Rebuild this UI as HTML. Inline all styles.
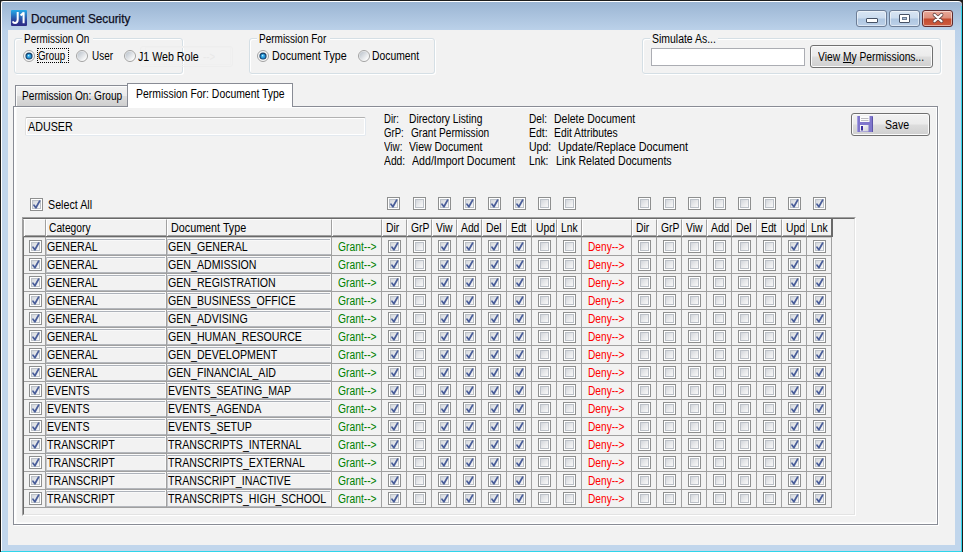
<!DOCTYPE html>
<html><head><meta charset="utf-8">
<style>
*{box-sizing:border-box;margin:0;padding:0}
html,body{width:963px;height:552px;overflow:hidden;background:#000}
body{position:relative;font-family:"Liberation Sans", sans-serif;font-size:12px;color:#000}
.a{position:absolute}
.t{position:absolute;white-space:pre;font-size:12px;line-height:13px;transform-origin:0 0;color:#000}
</style></head><body>
<svg width="0" height="0" style="position:absolute">
<defs>
<linearGradient id="cbg" x1="0" y1="0" x2="1" y2="1"><stop offset="0" stop-color="#d0d4da"/><stop offset="0.5" stop-color="#e8e9eb"/><stop offset="1" stop-color="#fbfbfb"/></linearGradient>
<linearGradient id="rdg" x1="0.15" y1="0.15" x2="0.85" y2="0.85"><stop offset="0" stop-color="#c2c9d1"/><stop offset="1" stop-color="#fbfbfb"/></linearGradient>
<radialGradient id="rdd" cx="0.5" cy="0.5" r="0.5" fx="0.4" fy="0.35"><stop offset="0" stop-color="#c8f0ff"/><stop offset="0.45" stop-color="#36ade9"/><stop offset="1" stop-color="#1f7fc4"/></radialGradient>
<g id="cbu"><rect x="0.5" y="0.5" width="12" height="12" fill="#fff" stroke="#8e8f8f"/><rect x="2.5" y="2.5" width="8" height="8" fill="url(#cbg)" stroke="#bcc1c8"/></g>
<g id="cbc"><use href="#cbu"/><path d="M4 7.3 L5.9 9.8 L9.6 3.1" fill="none" stroke="#4a5e9a" stroke-width="1.8" stroke-linecap="round" stroke-linejoin="round"/></g>
<g id="rdu"><circle cx="6" cy="6" r="5.5" fill="#f4f4f4" stroke="#a2a2a2"/><circle cx="6" cy="6" r="4.6" fill="url(#rdg)"/></g>
<g id="rdc"><circle cx="6" cy="6" r="5.5" fill="#f8f8f8" stroke="#a2a2a2"/><circle cx="6" cy="6" r="3.6" fill="#173f66"/><circle cx="6" cy="6.2" r="2.5" fill="url(#rdd)"/></g>
</defs></svg>

<div class="a" style="left:0px;top:0px;width:963px;height:552px;background:#1c1c1c"></div>
<div class="a" style="left:1px;top:1px;width:961px;height:551px;background:linear-gradient(#9bb5d3,#bcd2ea 29px,#c1d6ec 60px,#c1d6ec);border-left:1px solid #fff;border-top:1px solid #fff;border-radius:2px 4px 0 0"></div>
<div class="a" style="left:961px;top:6px;width:1px;height:546px;background:#30d5ea"></div>
<div class="a" style="left:1px;top:551px;width:961px;height:1px;background:#30d5ea"></div>
<svg class="a" style="left:11px;top:10px" width="16" height="16"><defs><linearGradient id="ic" x1="0" y1="0" x2="0" y2="1"><stop offset="0" stop-color="#25abe9"/><stop offset="0.45" stop-color="#2a64b5"/><stop offset="0.72" stop-color="#2c3b95"/><stop offset="1" stop-color="#2f2b84"/></linearGradient></defs><rect x="0" y="0" width="16" height="16" rx="1" fill="url(#ic)"/><path d="M6.7 2 V9.6 Q6.7 13 4 13 Q2.4 13 1.7 11.4" fill="none" stroke="#fff" stroke-width="2"/><path d="M12.6 13.3 V2.2 M12.8 2.4 L9.6 5.4" fill="none" stroke="#fff" stroke-width="2"/></svg>
<div class="t" style="left:31.00px;top:13px;transform:scaleX(0.9802);color:#0e0e22;-webkit-text-stroke:0.25px #0e0e22">Document Security</div>
<div class="a" style="left:856px;top:10px;width:31px;height:17px;border:1px solid #6c7d96;border-radius:3px;background:linear-gradient(#d8e5f3,#cbdcef 48%,#aec6e1 52%,#bcd0e8);box-shadow:inset 0 0 0 1px rgba(255,255,255,0.5)"></div>
<div class="a" style="left:889px;top:10px;width:31px;height:17px;border:1px solid #6c7d96;border-radius:3px;background:linear-gradient(#d8e5f3,#cbdcef 48%,#aec6e1 52%,#bcd0e8);box-shadow:inset 0 0 0 1px rgba(255,255,255,0.5)"></div>
<div class="a" style="left:922px;top:10px;width:31px;height:17px;border:1px solid #5e2a2e;border-radius:3px;background:linear-gradient(#e9a899,#dc8f7c 48%,#c44a2e 52%,#cd5c40);box-shadow:inset 0 0 0 1px rgba(255,255,255,0.5)"></div>
<div class="a" style="left:866px;top:18px;width:12px;height:5px;background:#fff;border:1px solid #465266;border-radius:1px"></div>
<div class="a" style="left:899px;top:14px;width:11px;height:9px;background:#fff;border:1px solid #465266;border-radius:1px"></div>
<div class="a" style="left:902px;top:17px;width:5px;height:3px;background:#a7bcd6;border:1px solid #6a7a90"></div>
<svg class="a" style="left:930px;top:11px" width="16" height="14"><path d="M4.5 3.8 L11.5 10.2 M11.5 3.8 L4.5 10.2" stroke="#6b4a48" stroke-width="3.8" stroke-linecap="round"/><path d="M4.5 3.8 L11.5 10.2 M11.5 3.8 L4.5 10.2" stroke="#fff" stroke-width="2.2" stroke-linecap="round"/></svg>
<div class="a" style="left:8px;top:30px;width:947px;height:515px;background:#f2f2f2"></div>
<div class="a" style="left:14px;top:38px;width:169px;height:36px;border:1px solid #d5dfe5;border-radius:3px;box-shadow:inset 1px 1px 0 #fff, 1px 1px 0 #fff"></div><div class="a" style="left:22px;top:37px;width:71px;height:3px;background:#f2f2f2"></div><div class="t" style="left:24.00px;top:33px;transform:scaleX(0.8304);">Permission On</div>
<div class="a" style="left:249px;top:38px;width:186px;height:36px;border:1px solid #d5dfe5;border-radius:3px;box-shadow:inset 1px 1px 0 #fff, 1px 1px 0 #fff"></div><div class="a" style="left:257px;top:37px;width:73px;height:3px;background:#f2f2f2"></div><div class="t" style="left:259.00px;top:33px;transform:scaleX(0.8333);">Permission For</div>
<div class="a" style="left:642px;top:38px;width:299px;height:36px;border:1px solid #d5dfe5;border-radius:3px;box-shadow:inset 1px 1px 0 #fff, 1px 1px 0 #fff"></div><div class="a" style="left:650px;top:37px;width:68px;height:3px;background:#f2f2f2"></div><div class="t" style="left:652.00px;top:33px;transform:scaleX(0.8712);">Simulate As...</div>
<div class="a" style="left:140px;top:46px;width:93px;height:21px;border:1px solid #eeeeee;border-radius:3px"></div>
<div class="a" style="left:145px;top:47px;width:86px;height:18px;border:1px solid #f0f0f0"></div>
<div class="t" style="left:203.00px;top:51px;transform:scaleX(0.8000);color:#e9e9e9">--></div>
<svg class="a" style="left:23px;top:50px" width="12" height="12"><use href="#rdc"/></svg>
<div class="t" style="left:38.00px;top:50px;transform:scaleX(0.8118);">Group</div>
<div class="a" style="left:37px;top:48px;width:32px;height:15px;border:1px dotted #000"></div>
<svg class="a" style="left:76px;top:50px" width="12" height="12"><use href="#rdu"/></svg>
<div class="t" style="left:92.00px;top:50px;transform:scaleX(0.8280);">User</div>
<svg class="a" style="left:124px;top:50px" width="12" height="12"><use href="#rdu"/></svg>
<div class="t" style="left:137.80px;top:51px;transform:scaleX(0.8870);">J1 Web Role</div>
<svg class="a" style="left:257px;top:50px" width="12" height="12"><use href="#rdc"/></svg>
<div class="t" style="left:272.00px;top:50px;transform:scaleX(0.8905);">Document Type</div>
<svg class="a" style="left:358px;top:50px" width="12" height="12"><use href="#rdu"/></svg>
<div class="t" style="left:372.00px;top:50px;transform:scaleX(0.8618);">Document</div>
<div class="a" style="left:651px;top:48px;width:154px;height:18px;background:#fff;border:1px solid #abadb3"></div>
<div class="a" style="left:810px;top:45px;width:123px;height:23px;border:1px solid #707070;border-radius:3px;background:linear-gradient(#f2f2f2,#ebebeb 48%,#dddddd 52%,#cfcfcf);box-shadow:inset 0 0 0 1px #fbfbfb"></div>
<div class="t" style="left:818.00px;top:51px;transform:scaleX(0.8565);">View <u>M</u>y Permissions...</div>
<div class="a" style="left:13px;top:106px;width:925px;height:419px;border:1px solid #898c95;background:#f2f2f2;box-shadow:inset 1px 1px 0 #fff,inset 2px 0 0 #fefefe,inset 3px 0 0 #f9f9f9,inset -1px -1px 0 #fff,inset 0 -2px 0 #f9f9f9,1px 1px 0 #fff"></div>
<div class="a" style="left:15px;top:85px;width:113px;height:21px;border:1px solid #898c95;border-bottom:none;background:linear-gradient(#f2f2f2,#ebebeb 48%,#dddddd 52%,#cfcfcf);box-shadow:inset 1px 1px 0 #fcfcfc"></div>
<div class="t" style="left:21.60px;top:90px;transform:scaleX(0.8445);">Permission On: Group</div>
<div class="a" style="left:127px;top:83px;width:166px;height:24px;border:1px solid #898c95;border-bottom:none;background:#fff"></div>
<div class="t" style="left:136.00px;top:88px;transform:scaleX(0.8684);">Permission For: Document Type</div>
<div class="a" style="left:25px;top:117px;width:341px;height:19px;border:1px solid #b2b2b2;border-bottom-color:#e3e9ef;border-right-color:#e3e9ef;border-left-color:#e0e0e0;background:#f2f2f2;border-radius:2px;box-shadow:inset 1px 1px 0 #fff,inset -1px -1px 0 #fff"></div>
<div class="t" style="left:28.00px;top:121px;transform:scaleX(0.8940);">ADUSER</div>
<div class="t" style="left:384.30px;top:113px;transform:scaleX(0.7947);">Dir:</div>
<div class="t" style="left:409.20px;top:113px;transform:scaleX(0.8523);">Directory Listing</div>
<div class="t" style="left:384.30px;top:127px;transform:scaleX(0.8000);">GrP:</div>
<div class="t" style="left:410.80px;top:127px;transform:scaleX(0.8430);">Grant Permission</div>
<div class="t" style="left:384.30px;top:141px;transform:scaleX(0.8182);">Viw:</div>
<div class="t" style="left:409.20px;top:141px;transform:scaleX(0.8762);">View Document</div>
<div class="t" style="left:384.30px;top:155px;transform:scaleX(0.8600);">Add:</div>
<div class="t" style="left:412.40px;top:155px;transform:scaleX(0.8846);">Add/Import Document</div>
<div class="t" style="left:529.30px;top:113px;transform:scaleX(0.8429);">Del:</div>
<div class="t" style="left:554.30px;top:113px;transform:scaleX(0.8753);">Delete Document</div>
<div class="t" style="left:529.30px;top:127px;transform:scaleX(0.8714);">Edt:</div>
<div class="t" style="left:554.30px;top:127px;transform:scaleX(0.8608);">Edit Attributes</div>
<div class="t" style="left:529.30px;top:141px;transform:scaleX(0.8760);">Upd:</div>
<div class="t" style="left:558.40px;top:141px;transform:scaleX(0.9028);">Update/Replace Document</div>
<div class="t" style="left:529.30px;top:155px;transform:scaleX(0.8565);">Lnk:</div>
<div class="t" style="left:556.30px;top:155px;transform:scaleX(0.8847);">Link Related Documents</div>
<div class="a" style="left:851px;top:113px;width:79px;height:23px;border:1px solid #707070;border-radius:3px;background:linear-gradient(#f2f2f2,#ebebeb 48%,#dddddd 52%,#cfcfcf);box-shadow:inset 0 0 0 1px #fbfbfb"></div>
<svg class="a" style="left:857px;top:116px" width="16" height="16"><defs><linearGradient id="fsh" x1="0" y1="0" x2="1" y2="1"><stop offset="0" stop-color="#ffffff"/><stop offset="1" stop-color="#cfcfd6"/></linearGradient></defs><rect x="0" y="0" width="16" height="16" fill="#7f76cc"/><rect x="0" y="0" width="1" height="16" fill="#a29ce0"/><rect x="15" y="1" width="1" height="15" fill="#5d55a8"/><rect x="3" y="0" width="9.5" height="6" fill="#fbfbfb"/><rect x="4" y="2" width="7.5" height="1" fill="#bdbdc2"/><rect x="4" y="4" width="7.5" height="1" fill="#bdbdc2"/><rect x="3" y="9" width="8.5" height="6.5" fill="url(#fsh)"/><rect x="4" y="10" width="2" height="4.5" fill="#3b2fa0"/></svg>
<div class="t" style="left:885.00px;top:119px;transform:scaleX(0.8786);">Save</div>
<svg class="a" style="left:30px;top:198px" width="13" height="13"><use href="#cbc"/></svg>
<div class="t" style="left:48.00px;top:199px;transform:scaleX(0.8918);">Select All</div>
<svg class="a" style="left:387px;top:197px" width="13" height="13"><use href="#cbc"/></svg>
<svg class="a" style="left:638px;top:197px" width="13" height="13"><use href="#cbu"/></svg>
<svg class="a" style="left:413px;top:197px" width="13" height="13"><use href="#cbu"/></svg>
<svg class="a" style="left:663px;top:197px" width="13" height="13"><use href="#cbu"/></svg>
<svg class="a" style="left:438px;top:197px" width="13" height="13"><use href="#cbc"/></svg>
<svg class="a" style="left:688px;top:197px" width="13" height="13"><use href="#cbu"/></svg>
<svg class="a" style="left:463px;top:197px" width="13" height="13"><use href="#cbc"/></svg>
<svg class="a" style="left:713px;top:197px" width="13" height="13"><use href="#cbu"/></svg>
<svg class="a" style="left:488px;top:197px" width="13" height="13"><use href="#cbc"/></svg>
<svg class="a" style="left:738px;top:197px" width="13" height="13"><use href="#cbu"/></svg>
<svg class="a" style="left:513px;top:197px" width="13" height="13"><use href="#cbc"/></svg>
<svg class="a" style="left:763px;top:197px" width="13" height="13"><use href="#cbu"/></svg>
<svg class="a" style="left:538px;top:197px" width="13" height="13"><use href="#cbu"/></svg>
<svg class="a" style="left:788px;top:197px" width="13" height="13"><use href="#cbc"/></svg>
<svg class="a" style="left:563px;top:197px" width="13" height="13"><use href="#cbu"/></svg>
<svg class="a" style="left:813px;top:197px" width="13" height="13"><use href="#cbc"/></svg>
<div class="a" style="left:22px;top:217px;width:834px;height:299px;border-left:1px solid #a0a0a0;border-top:1px solid #a0a0a0;border-right:1px solid #fff;border-bottom:1px solid #fff"></div>
<div class="a" style="left:23px;top:218px;width:832px;height:297px;border-left:1px solid #696969;border-top:1px solid #696969;border-right:1px solid #e3e3e3;border-bottom:1px solid #e3e3e3"></div>
<div class="a" style="left:24px;top:237px;width:808px;height:1px;background:#c8c8c8"></div>
<div class="a" style="left:23px;top:219px;width:23px;height:18px;background:#f2f2f2;border-left:1px solid #a0a0a0;border-top:1px solid #fff;border-bottom:1px solid #696969;box-shadow:inset 1px 0 0 #fff,inset 0 -1px 0 #a0a0a0"></div>
<div class="a" style="left:45px;top:219px;width:122px;height:18px;background:#f2f2f2;border-left:1px solid #a0a0a0;border-top:1px solid #fff;border-bottom:1px solid #696969;box-shadow:inset 1px 0 0 #fff,inset 0 -1px 0 #a0a0a0"></div>
<div class="t" style="left:49.30px;top:222px;transform:scaleX(0.8531);">Category</div>
<div class="a" style="left:166px;top:219px;width:166px;height:18px;background:#f2f2f2;border-left:1px solid #a0a0a0;border-top:1px solid #fff;border-bottom:1px solid #696969;box-shadow:inset 1px 0 0 #fff,inset 0 -1px 0 #a0a0a0"></div>
<div class="t" style="left:171.00px;top:222px;transform:scaleX(0.8976);">Document Type</div>
<div class="a" style="left:331px;top:219px;width:51px;height:18px;background:#f2f2f2;border-left:1px solid #a0a0a0;border-top:1px solid #fff;border-bottom:1px solid #696969;box-shadow:inset 1px 0 0 #fff,inset 0 -1px 0 #a0a0a0"></div>
<div class="a" style="left:381px;top:219px;width:26px;height:18px;background:#f2f2f2;border-left:1px solid #a0a0a0;border-top:1px solid #fff;border-bottom:1px solid #696969;box-shadow:inset 1px 0 0 #fff,inset 0 -1px 0 #a0a0a0"></div>
<div class="t" style="left:386.00px;top:222px;transform:scaleX(0.8600);">Dir</div>
<div class="a" style="left:406px;top:219px;width:26px;height:18px;background:#f2f2f2;border-left:1px solid #a0a0a0;border-top:1px solid #fff;border-bottom:1px solid #696969;box-shadow:inset 1px 0 0 #fff,inset 0 -1px 0 #a0a0a0"></div>
<div class="t" style="left:411.00px;top:222px;transform:scaleX(0.8600);">GrP</div>
<div class="a" style="left:431px;top:219px;width:26px;height:18px;background:#f2f2f2;border-left:1px solid #a0a0a0;border-top:1px solid #fff;border-bottom:1px solid #696969;box-shadow:inset 1px 0 0 #fff,inset 0 -1px 0 #a0a0a0"></div>
<div class="t" style="left:436.00px;top:222px;transform:scaleX(0.8600);">Viw</div>
<div class="a" style="left:456px;top:219px;width:26px;height:18px;background:#f2f2f2;border-left:1px solid #a0a0a0;border-top:1px solid #fff;border-bottom:1px solid #696969;box-shadow:inset 1px 0 0 #fff,inset 0 -1px 0 #a0a0a0"></div>
<div class="t" style="left:461.00px;top:222px;transform:scaleX(0.8600);">Add</div>
<div class="a" style="left:481px;top:219px;width:26px;height:18px;background:#f2f2f2;border-left:1px solid #a0a0a0;border-top:1px solid #fff;border-bottom:1px solid #696969;box-shadow:inset 1px 0 0 #fff,inset 0 -1px 0 #a0a0a0"></div>
<div class="t" style="left:486.00px;top:222px;transform:scaleX(0.8600);">Del</div>
<div class="a" style="left:506px;top:219px;width:26px;height:18px;background:#f2f2f2;border-left:1px solid #a0a0a0;border-top:1px solid #fff;border-bottom:1px solid #696969;box-shadow:inset 1px 0 0 #fff,inset 0 -1px 0 #a0a0a0"></div>
<div class="t" style="left:511.00px;top:222px;transform:scaleX(0.8600);">Edt</div>
<div class="a" style="left:531px;top:219px;width:26px;height:18px;background:#f2f2f2;border-left:1px solid #a0a0a0;border-top:1px solid #fff;border-bottom:1px solid #696969;box-shadow:inset 1px 0 0 #fff,inset 0 -1px 0 #a0a0a0"></div>
<div class="t" style="left:536.00px;top:222px;transform:scaleX(0.8600);">Upd</div>
<div class="a" style="left:556px;top:219px;width:26px;height:18px;background:#f2f2f2;border-left:1px solid #a0a0a0;border-top:1px solid #fff;border-bottom:1px solid #696969;box-shadow:inset 1px 0 0 #fff,inset 0 -1px 0 #a0a0a0"></div>
<div class="t" style="left:561.00px;top:222px;transform:scaleX(0.8600);">Lnk</div>
<div class="a" style="left:581px;top:219px;width:51px;height:18px;background:#f2f2f2;border-left:1px solid #a0a0a0;border-top:1px solid #fff;border-bottom:1px solid #696969;box-shadow:inset 1px 0 0 #fff,inset 0 -1px 0 #a0a0a0"></div>
<div class="a" style="left:631px;top:219px;width:26px;height:18px;background:#f2f2f2;border-left:1px solid #a0a0a0;border-top:1px solid #fff;border-bottom:1px solid #696969;box-shadow:inset 1px 0 0 #fff,inset 0 -1px 0 #a0a0a0"></div>
<div class="t" style="left:636.00px;top:222px;transform:scaleX(0.8600);">Dir</div>
<div class="a" style="left:656px;top:219px;width:26px;height:18px;background:#f2f2f2;border-left:1px solid #a0a0a0;border-top:1px solid #fff;border-bottom:1px solid #696969;box-shadow:inset 1px 0 0 #fff,inset 0 -1px 0 #a0a0a0"></div>
<div class="t" style="left:661.00px;top:222px;transform:scaleX(0.8600);">GrP</div>
<div class="a" style="left:681px;top:219px;width:26px;height:18px;background:#f2f2f2;border-left:1px solid #a0a0a0;border-top:1px solid #fff;border-bottom:1px solid #696969;box-shadow:inset 1px 0 0 #fff,inset 0 -1px 0 #a0a0a0"></div>
<div class="t" style="left:686.00px;top:222px;transform:scaleX(0.8600);">Viw</div>
<div class="a" style="left:706px;top:219px;width:26px;height:18px;background:#f2f2f2;border-left:1px solid #a0a0a0;border-top:1px solid #fff;border-bottom:1px solid #696969;box-shadow:inset 1px 0 0 #fff,inset 0 -1px 0 #a0a0a0"></div>
<div class="t" style="left:711.00px;top:222px;transform:scaleX(0.8600);">Add</div>
<div class="a" style="left:731px;top:219px;width:26px;height:18px;background:#f2f2f2;border-left:1px solid #a0a0a0;border-top:1px solid #fff;border-bottom:1px solid #696969;box-shadow:inset 1px 0 0 #fff,inset 0 -1px 0 #a0a0a0"></div>
<div class="t" style="left:736.00px;top:222px;transform:scaleX(0.8600);">Del</div>
<div class="a" style="left:756px;top:219px;width:26px;height:18px;background:#f2f2f2;border-left:1px solid #a0a0a0;border-top:1px solid #fff;border-bottom:1px solid #696969;box-shadow:inset 1px 0 0 #fff,inset 0 -1px 0 #a0a0a0"></div>
<div class="t" style="left:761.00px;top:222px;transform:scaleX(0.8600);">Edt</div>
<div class="a" style="left:781px;top:219px;width:26px;height:18px;background:#f2f2f2;border-left:1px solid #a0a0a0;border-top:1px solid #fff;border-bottom:1px solid #696969;box-shadow:inset 1px 0 0 #fff,inset 0 -1px 0 #a0a0a0"></div>
<div class="t" style="left:786.00px;top:222px;transform:scaleX(0.8600);">Upd</div>
<div class="a" style="left:806px;top:219px;width:26px;height:18px;background:#f2f2f2;border-left:1px solid #a0a0a0;border-top:1px solid #fff;border-bottom:1px solid #696969;box-shadow:inset 1px 0 0 #fff,inset 0 -1px 0 #a0a0a0"></div>
<div class="t" style="left:811.00px;top:222px;transform:scaleX(0.8600);">Lnk</div>
<div class="a" style="left:831px;top:219px;width:2px;height:18px;background:#696969"></div>
<div class="a" style="left:24px;top:255px;width:808px;height:1px;background:#a0a0a0"></div>
<div class="a" style="left:46px;top:238px;width:120px;height:1px;background:#fbfbfb"></div>
<div class="a" style="left:46px;top:239px;width:120px;height:1px;background:#adb2ba"></div>
<div class="a" style="left:46px;top:240px;width:120px;height:1px;background:#f8f8f8"></div>
<div class="a" style="left:46px;top:254px;width:120px;height:1px;background:#b4b7bc"></div>
<div class="a" style="left:46px;top:239px;width:1px;height:15px;background:#c4c6ca"></div>
<div class="a" style="left:165px;top:239px;width:1px;height:15px;background:#fafafa"></div>
<div class="a" style="left:167px;top:238px;width:164px;height:1px;background:#fbfbfb"></div>
<div class="a" style="left:167px;top:239px;width:164px;height:1px;background:#adb2ba"></div>
<div class="a" style="left:167px;top:240px;width:164px;height:1px;background:#f8f8f8"></div>
<div class="a" style="left:167px;top:254px;width:164px;height:1px;background:#b4b7bc"></div>
<div class="a" style="left:167px;top:239px;width:1px;height:15px;background:#c4c6ca"></div>
<div class="a" style="left:330px;top:239px;width:1px;height:15px;background:#fafafa"></div>
<svg class="a" style="left:29px;top:240px" width="13" height="13"><use href="#cbc"/></svg>
<div class="t" style="left:46.60px;top:241px;transform:scaleX(0.8850);">GENERAL</div>
<div class="t" style="left:168.00px;top:241px;transform:scaleX(0.8850);">GEN_GENERAL</div>
<div class="t" style="left:337.50px;top:241px;transform:scaleX(0.8578);color:#008000">Grant--></div>
<div class="t" style="left:588.00px;top:241px;transform:scaleX(0.8465);color:#ff0000">Deny--></div>
<svg class="a" style="left:388px;top:240px" width="13" height="13"><use href="#cbc"/></svg>
<svg class="a" style="left:638px;top:240px" width="13" height="13"><use href="#cbu"/></svg>
<svg class="a" style="left:413px;top:240px" width="13" height="13"><use href="#cbu"/></svg>
<svg class="a" style="left:663px;top:240px" width="13" height="13"><use href="#cbu"/></svg>
<svg class="a" style="left:438px;top:240px" width="13" height="13"><use href="#cbc"/></svg>
<svg class="a" style="left:688px;top:240px" width="13" height="13"><use href="#cbu"/></svg>
<svg class="a" style="left:463px;top:240px" width="13" height="13"><use href="#cbc"/></svg>
<svg class="a" style="left:713px;top:240px" width="13" height="13"><use href="#cbu"/></svg>
<svg class="a" style="left:488px;top:240px" width="13" height="13"><use href="#cbc"/></svg>
<svg class="a" style="left:738px;top:240px" width="13" height="13"><use href="#cbu"/></svg>
<svg class="a" style="left:513px;top:240px" width="13" height="13"><use href="#cbc"/></svg>
<svg class="a" style="left:763px;top:240px" width="13" height="13"><use href="#cbu"/></svg>
<svg class="a" style="left:538px;top:240px" width="13" height="13"><use href="#cbu"/></svg>
<svg class="a" style="left:788px;top:240px" width="13" height="13"><use href="#cbc"/></svg>
<svg class="a" style="left:563px;top:240px" width="13" height="13"><use href="#cbu"/></svg>
<svg class="a" style="left:813px;top:240px" width="13" height="13"><use href="#cbc"/></svg>
<div class="a" style="left:24px;top:273px;width:808px;height:1px;background:#a0a0a0"></div>
<div class="a" style="left:46px;top:256px;width:120px;height:1px;background:#fbfbfb"></div>
<div class="a" style="left:46px;top:257px;width:120px;height:1px;background:#adb2ba"></div>
<div class="a" style="left:46px;top:258px;width:120px;height:1px;background:#f8f8f8"></div>
<div class="a" style="left:46px;top:272px;width:120px;height:1px;background:#b4b7bc"></div>
<div class="a" style="left:46px;top:257px;width:1px;height:15px;background:#c4c6ca"></div>
<div class="a" style="left:165px;top:257px;width:1px;height:15px;background:#fafafa"></div>
<div class="a" style="left:167px;top:256px;width:164px;height:1px;background:#fbfbfb"></div>
<div class="a" style="left:167px;top:257px;width:164px;height:1px;background:#adb2ba"></div>
<div class="a" style="left:167px;top:258px;width:164px;height:1px;background:#f8f8f8"></div>
<div class="a" style="left:167px;top:272px;width:164px;height:1px;background:#b4b7bc"></div>
<div class="a" style="left:167px;top:257px;width:1px;height:15px;background:#c4c6ca"></div>
<div class="a" style="left:330px;top:257px;width:1px;height:15px;background:#fafafa"></div>
<svg class="a" style="left:29px;top:258px" width="13" height="13"><use href="#cbc"/></svg>
<div class="t" style="left:46.60px;top:259px;transform:scaleX(0.8850);">GENERAL</div>
<div class="t" style="left:168.00px;top:259px;transform:scaleX(0.8850);">GEN_ADMISSION</div>
<div class="t" style="left:337.50px;top:259px;transform:scaleX(0.8578);color:#008000">Grant--></div>
<div class="t" style="left:588.00px;top:259px;transform:scaleX(0.8465);color:#ff0000">Deny--></div>
<svg class="a" style="left:388px;top:258px" width="13" height="13"><use href="#cbc"/></svg>
<svg class="a" style="left:638px;top:258px" width="13" height="13"><use href="#cbu"/></svg>
<svg class="a" style="left:413px;top:258px" width="13" height="13"><use href="#cbu"/></svg>
<svg class="a" style="left:663px;top:258px" width="13" height="13"><use href="#cbu"/></svg>
<svg class="a" style="left:438px;top:258px" width="13" height="13"><use href="#cbc"/></svg>
<svg class="a" style="left:688px;top:258px" width="13" height="13"><use href="#cbu"/></svg>
<svg class="a" style="left:463px;top:258px" width="13" height="13"><use href="#cbc"/></svg>
<svg class="a" style="left:713px;top:258px" width="13" height="13"><use href="#cbu"/></svg>
<svg class="a" style="left:488px;top:258px" width="13" height="13"><use href="#cbc"/></svg>
<svg class="a" style="left:738px;top:258px" width="13" height="13"><use href="#cbu"/></svg>
<svg class="a" style="left:513px;top:258px" width="13" height="13"><use href="#cbc"/></svg>
<svg class="a" style="left:763px;top:258px" width="13" height="13"><use href="#cbu"/></svg>
<svg class="a" style="left:538px;top:258px" width="13" height="13"><use href="#cbu"/></svg>
<svg class="a" style="left:788px;top:258px" width="13" height="13"><use href="#cbc"/></svg>
<svg class="a" style="left:563px;top:258px" width="13" height="13"><use href="#cbu"/></svg>
<svg class="a" style="left:813px;top:258px" width="13" height="13"><use href="#cbc"/></svg>
<div class="a" style="left:24px;top:291px;width:808px;height:1px;background:#a0a0a0"></div>
<div class="a" style="left:46px;top:274px;width:120px;height:1px;background:#fbfbfb"></div>
<div class="a" style="left:46px;top:275px;width:120px;height:1px;background:#adb2ba"></div>
<div class="a" style="left:46px;top:276px;width:120px;height:1px;background:#f8f8f8"></div>
<div class="a" style="left:46px;top:290px;width:120px;height:1px;background:#b4b7bc"></div>
<div class="a" style="left:46px;top:275px;width:1px;height:15px;background:#c4c6ca"></div>
<div class="a" style="left:165px;top:275px;width:1px;height:15px;background:#fafafa"></div>
<div class="a" style="left:167px;top:274px;width:164px;height:1px;background:#fbfbfb"></div>
<div class="a" style="left:167px;top:275px;width:164px;height:1px;background:#adb2ba"></div>
<div class="a" style="left:167px;top:276px;width:164px;height:1px;background:#f8f8f8"></div>
<div class="a" style="left:167px;top:290px;width:164px;height:1px;background:#b4b7bc"></div>
<div class="a" style="left:167px;top:275px;width:1px;height:15px;background:#c4c6ca"></div>
<div class="a" style="left:330px;top:275px;width:1px;height:15px;background:#fafafa"></div>
<svg class="a" style="left:29px;top:276px" width="13" height="13"><use href="#cbc"/></svg>
<div class="t" style="left:46.60px;top:277px;transform:scaleX(0.8850);">GENERAL</div>
<div class="t" style="left:168.00px;top:277px;transform:scaleX(0.8850);">GEN_REGISTRATION</div>
<div class="t" style="left:337.50px;top:277px;transform:scaleX(0.8578);color:#008000">Grant--></div>
<div class="t" style="left:588.00px;top:277px;transform:scaleX(0.8465);color:#ff0000">Deny--></div>
<svg class="a" style="left:388px;top:276px" width="13" height="13"><use href="#cbc"/></svg>
<svg class="a" style="left:638px;top:276px" width="13" height="13"><use href="#cbu"/></svg>
<svg class="a" style="left:413px;top:276px" width="13" height="13"><use href="#cbu"/></svg>
<svg class="a" style="left:663px;top:276px" width="13" height="13"><use href="#cbu"/></svg>
<svg class="a" style="left:438px;top:276px" width="13" height="13"><use href="#cbc"/></svg>
<svg class="a" style="left:688px;top:276px" width="13" height="13"><use href="#cbu"/></svg>
<svg class="a" style="left:463px;top:276px" width="13" height="13"><use href="#cbc"/></svg>
<svg class="a" style="left:713px;top:276px" width="13" height="13"><use href="#cbu"/></svg>
<svg class="a" style="left:488px;top:276px" width="13" height="13"><use href="#cbc"/></svg>
<svg class="a" style="left:738px;top:276px" width="13" height="13"><use href="#cbu"/></svg>
<svg class="a" style="left:513px;top:276px" width="13" height="13"><use href="#cbc"/></svg>
<svg class="a" style="left:763px;top:276px" width="13" height="13"><use href="#cbu"/></svg>
<svg class="a" style="left:538px;top:276px" width="13" height="13"><use href="#cbu"/></svg>
<svg class="a" style="left:788px;top:276px" width="13" height="13"><use href="#cbc"/></svg>
<svg class="a" style="left:563px;top:276px" width="13" height="13"><use href="#cbu"/></svg>
<svg class="a" style="left:813px;top:276px" width="13" height="13"><use href="#cbc"/></svg>
<div class="a" style="left:24px;top:309px;width:808px;height:1px;background:#a0a0a0"></div>
<div class="a" style="left:46px;top:292px;width:120px;height:1px;background:#fbfbfb"></div>
<div class="a" style="left:46px;top:293px;width:120px;height:1px;background:#adb2ba"></div>
<div class="a" style="left:46px;top:294px;width:120px;height:1px;background:#f8f8f8"></div>
<div class="a" style="left:46px;top:308px;width:120px;height:1px;background:#b4b7bc"></div>
<div class="a" style="left:46px;top:293px;width:1px;height:15px;background:#c4c6ca"></div>
<div class="a" style="left:165px;top:293px;width:1px;height:15px;background:#fafafa"></div>
<div class="a" style="left:167px;top:292px;width:164px;height:1px;background:#fbfbfb"></div>
<div class="a" style="left:167px;top:293px;width:164px;height:1px;background:#adb2ba"></div>
<div class="a" style="left:167px;top:294px;width:164px;height:1px;background:#f8f8f8"></div>
<div class="a" style="left:167px;top:308px;width:164px;height:1px;background:#b4b7bc"></div>
<div class="a" style="left:167px;top:293px;width:1px;height:15px;background:#c4c6ca"></div>
<div class="a" style="left:330px;top:293px;width:1px;height:15px;background:#fafafa"></div>
<svg class="a" style="left:29px;top:294px" width="13" height="13"><use href="#cbc"/></svg>
<div class="t" style="left:46.60px;top:295px;transform:scaleX(0.8850);">GENERAL</div>
<div class="t" style="left:168.00px;top:295px;transform:scaleX(0.8850);">GEN_BUSINESS_OFFICE</div>
<div class="t" style="left:337.50px;top:295px;transform:scaleX(0.8578);color:#008000">Grant--></div>
<div class="t" style="left:588.00px;top:295px;transform:scaleX(0.8465);color:#ff0000">Deny--></div>
<svg class="a" style="left:388px;top:294px" width="13" height="13"><use href="#cbc"/></svg>
<svg class="a" style="left:638px;top:294px" width="13" height="13"><use href="#cbu"/></svg>
<svg class="a" style="left:413px;top:294px" width="13" height="13"><use href="#cbu"/></svg>
<svg class="a" style="left:663px;top:294px" width="13" height="13"><use href="#cbu"/></svg>
<svg class="a" style="left:438px;top:294px" width="13" height="13"><use href="#cbc"/></svg>
<svg class="a" style="left:688px;top:294px" width="13" height="13"><use href="#cbu"/></svg>
<svg class="a" style="left:463px;top:294px" width="13" height="13"><use href="#cbc"/></svg>
<svg class="a" style="left:713px;top:294px" width="13" height="13"><use href="#cbu"/></svg>
<svg class="a" style="left:488px;top:294px" width="13" height="13"><use href="#cbc"/></svg>
<svg class="a" style="left:738px;top:294px" width="13" height="13"><use href="#cbu"/></svg>
<svg class="a" style="left:513px;top:294px" width="13" height="13"><use href="#cbc"/></svg>
<svg class="a" style="left:763px;top:294px" width="13" height="13"><use href="#cbu"/></svg>
<svg class="a" style="left:538px;top:294px" width="13" height="13"><use href="#cbu"/></svg>
<svg class="a" style="left:788px;top:294px" width="13" height="13"><use href="#cbc"/></svg>
<svg class="a" style="left:563px;top:294px" width="13" height="13"><use href="#cbu"/></svg>
<svg class="a" style="left:813px;top:294px" width="13" height="13"><use href="#cbc"/></svg>
<div class="a" style="left:24px;top:327px;width:808px;height:1px;background:#a0a0a0"></div>
<div class="a" style="left:46px;top:310px;width:120px;height:1px;background:#fbfbfb"></div>
<div class="a" style="left:46px;top:311px;width:120px;height:1px;background:#adb2ba"></div>
<div class="a" style="left:46px;top:312px;width:120px;height:1px;background:#f8f8f8"></div>
<div class="a" style="left:46px;top:326px;width:120px;height:1px;background:#b4b7bc"></div>
<div class="a" style="left:46px;top:311px;width:1px;height:15px;background:#c4c6ca"></div>
<div class="a" style="left:165px;top:311px;width:1px;height:15px;background:#fafafa"></div>
<div class="a" style="left:167px;top:310px;width:164px;height:1px;background:#fbfbfb"></div>
<div class="a" style="left:167px;top:311px;width:164px;height:1px;background:#adb2ba"></div>
<div class="a" style="left:167px;top:312px;width:164px;height:1px;background:#f8f8f8"></div>
<div class="a" style="left:167px;top:326px;width:164px;height:1px;background:#b4b7bc"></div>
<div class="a" style="left:167px;top:311px;width:1px;height:15px;background:#c4c6ca"></div>
<div class="a" style="left:330px;top:311px;width:1px;height:15px;background:#fafafa"></div>
<svg class="a" style="left:29px;top:312px" width="13" height="13"><use href="#cbc"/></svg>
<div class="t" style="left:46.60px;top:313px;transform:scaleX(0.8850);">GENERAL</div>
<div class="t" style="left:168.00px;top:313px;transform:scaleX(0.8850);">GEN_ADVISING</div>
<div class="t" style="left:337.50px;top:313px;transform:scaleX(0.8578);color:#008000">Grant--></div>
<div class="t" style="left:588.00px;top:313px;transform:scaleX(0.8465);color:#ff0000">Deny--></div>
<svg class="a" style="left:388px;top:312px" width="13" height="13"><use href="#cbc"/></svg>
<svg class="a" style="left:638px;top:312px" width="13" height="13"><use href="#cbu"/></svg>
<svg class="a" style="left:413px;top:312px" width="13" height="13"><use href="#cbu"/></svg>
<svg class="a" style="left:663px;top:312px" width="13" height="13"><use href="#cbu"/></svg>
<svg class="a" style="left:438px;top:312px" width="13" height="13"><use href="#cbc"/></svg>
<svg class="a" style="left:688px;top:312px" width="13" height="13"><use href="#cbu"/></svg>
<svg class="a" style="left:463px;top:312px" width="13" height="13"><use href="#cbc"/></svg>
<svg class="a" style="left:713px;top:312px" width="13" height="13"><use href="#cbu"/></svg>
<svg class="a" style="left:488px;top:312px" width="13" height="13"><use href="#cbc"/></svg>
<svg class="a" style="left:738px;top:312px" width="13" height="13"><use href="#cbu"/></svg>
<svg class="a" style="left:513px;top:312px" width="13" height="13"><use href="#cbc"/></svg>
<svg class="a" style="left:763px;top:312px" width="13" height="13"><use href="#cbu"/></svg>
<svg class="a" style="left:538px;top:312px" width="13" height="13"><use href="#cbu"/></svg>
<svg class="a" style="left:788px;top:312px" width="13" height="13"><use href="#cbc"/></svg>
<svg class="a" style="left:563px;top:312px" width="13" height="13"><use href="#cbu"/></svg>
<svg class="a" style="left:813px;top:312px" width="13" height="13"><use href="#cbc"/></svg>
<div class="a" style="left:24px;top:345px;width:808px;height:1px;background:#a0a0a0"></div>
<div class="a" style="left:46px;top:328px;width:120px;height:1px;background:#fbfbfb"></div>
<div class="a" style="left:46px;top:329px;width:120px;height:1px;background:#adb2ba"></div>
<div class="a" style="left:46px;top:330px;width:120px;height:1px;background:#f8f8f8"></div>
<div class="a" style="left:46px;top:344px;width:120px;height:1px;background:#b4b7bc"></div>
<div class="a" style="left:46px;top:329px;width:1px;height:15px;background:#c4c6ca"></div>
<div class="a" style="left:165px;top:329px;width:1px;height:15px;background:#fafafa"></div>
<div class="a" style="left:167px;top:328px;width:164px;height:1px;background:#fbfbfb"></div>
<div class="a" style="left:167px;top:329px;width:164px;height:1px;background:#adb2ba"></div>
<div class="a" style="left:167px;top:330px;width:164px;height:1px;background:#f8f8f8"></div>
<div class="a" style="left:167px;top:344px;width:164px;height:1px;background:#b4b7bc"></div>
<div class="a" style="left:167px;top:329px;width:1px;height:15px;background:#c4c6ca"></div>
<div class="a" style="left:330px;top:329px;width:1px;height:15px;background:#fafafa"></div>
<svg class="a" style="left:29px;top:330px" width="13" height="13"><use href="#cbc"/></svg>
<div class="t" style="left:46.60px;top:331px;transform:scaleX(0.8850);">GENERAL</div>
<div class="t" style="left:168.00px;top:331px;transform:scaleX(0.8850);">GEN_HUMAN_RESOURCE</div>
<div class="t" style="left:337.50px;top:331px;transform:scaleX(0.8578);color:#008000">Grant--></div>
<div class="t" style="left:588.00px;top:331px;transform:scaleX(0.8465);color:#ff0000">Deny--></div>
<svg class="a" style="left:388px;top:330px" width="13" height="13"><use href="#cbc"/></svg>
<svg class="a" style="left:638px;top:330px" width="13" height="13"><use href="#cbu"/></svg>
<svg class="a" style="left:413px;top:330px" width="13" height="13"><use href="#cbu"/></svg>
<svg class="a" style="left:663px;top:330px" width="13" height="13"><use href="#cbu"/></svg>
<svg class="a" style="left:438px;top:330px" width="13" height="13"><use href="#cbc"/></svg>
<svg class="a" style="left:688px;top:330px" width="13" height="13"><use href="#cbu"/></svg>
<svg class="a" style="left:463px;top:330px" width="13" height="13"><use href="#cbc"/></svg>
<svg class="a" style="left:713px;top:330px" width="13" height="13"><use href="#cbu"/></svg>
<svg class="a" style="left:488px;top:330px" width="13" height="13"><use href="#cbc"/></svg>
<svg class="a" style="left:738px;top:330px" width="13" height="13"><use href="#cbu"/></svg>
<svg class="a" style="left:513px;top:330px" width="13" height="13"><use href="#cbc"/></svg>
<svg class="a" style="left:763px;top:330px" width="13" height="13"><use href="#cbu"/></svg>
<svg class="a" style="left:538px;top:330px" width="13" height="13"><use href="#cbu"/></svg>
<svg class="a" style="left:788px;top:330px" width="13" height="13"><use href="#cbc"/></svg>
<svg class="a" style="left:563px;top:330px" width="13" height="13"><use href="#cbu"/></svg>
<svg class="a" style="left:813px;top:330px" width="13" height="13"><use href="#cbc"/></svg>
<div class="a" style="left:24px;top:363px;width:808px;height:1px;background:#a0a0a0"></div>
<div class="a" style="left:46px;top:346px;width:120px;height:1px;background:#fbfbfb"></div>
<div class="a" style="left:46px;top:347px;width:120px;height:1px;background:#adb2ba"></div>
<div class="a" style="left:46px;top:348px;width:120px;height:1px;background:#f8f8f8"></div>
<div class="a" style="left:46px;top:362px;width:120px;height:1px;background:#b4b7bc"></div>
<div class="a" style="left:46px;top:347px;width:1px;height:15px;background:#c4c6ca"></div>
<div class="a" style="left:165px;top:347px;width:1px;height:15px;background:#fafafa"></div>
<div class="a" style="left:167px;top:346px;width:164px;height:1px;background:#fbfbfb"></div>
<div class="a" style="left:167px;top:347px;width:164px;height:1px;background:#adb2ba"></div>
<div class="a" style="left:167px;top:348px;width:164px;height:1px;background:#f8f8f8"></div>
<div class="a" style="left:167px;top:362px;width:164px;height:1px;background:#b4b7bc"></div>
<div class="a" style="left:167px;top:347px;width:1px;height:15px;background:#c4c6ca"></div>
<div class="a" style="left:330px;top:347px;width:1px;height:15px;background:#fafafa"></div>
<svg class="a" style="left:29px;top:348px" width="13" height="13"><use href="#cbc"/></svg>
<div class="t" style="left:46.60px;top:349px;transform:scaleX(0.8850);">GENERAL</div>
<div class="t" style="left:168.00px;top:349px;transform:scaleX(0.8850);">GEN_DEVELOPMENT</div>
<div class="t" style="left:337.50px;top:349px;transform:scaleX(0.8578);color:#008000">Grant--></div>
<div class="t" style="left:588.00px;top:349px;transform:scaleX(0.8465);color:#ff0000">Deny--></div>
<svg class="a" style="left:388px;top:348px" width="13" height="13"><use href="#cbc"/></svg>
<svg class="a" style="left:638px;top:348px" width="13" height="13"><use href="#cbu"/></svg>
<svg class="a" style="left:413px;top:348px" width="13" height="13"><use href="#cbu"/></svg>
<svg class="a" style="left:663px;top:348px" width="13" height="13"><use href="#cbu"/></svg>
<svg class="a" style="left:438px;top:348px" width="13" height="13"><use href="#cbc"/></svg>
<svg class="a" style="left:688px;top:348px" width="13" height="13"><use href="#cbu"/></svg>
<svg class="a" style="left:463px;top:348px" width="13" height="13"><use href="#cbc"/></svg>
<svg class="a" style="left:713px;top:348px" width="13" height="13"><use href="#cbu"/></svg>
<svg class="a" style="left:488px;top:348px" width="13" height="13"><use href="#cbc"/></svg>
<svg class="a" style="left:738px;top:348px" width="13" height="13"><use href="#cbu"/></svg>
<svg class="a" style="left:513px;top:348px" width="13" height="13"><use href="#cbc"/></svg>
<svg class="a" style="left:763px;top:348px" width="13" height="13"><use href="#cbu"/></svg>
<svg class="a" style="left:538px;top:348px" width="13" height="13"><use href="#cbu"/></svg>
<svg class="a" style="left:788px;top:348px" width="13" height="13"><use href="#cbc"/></svg>
<svg class="a" style="left:563px;top:348px" width="13" height="13"><use href="#cbu"/></svg>
<svg class="a" style="left:813px;top:348px" width="13" height="13"><use href="#cbc"/></svg>
<div class="a" style="left:24px;top:381px;width:808px;height:1px;background:#a0a0a0"></div>
<div class="a" style="left:46px;top:364px;width:120px;height:1px;background:#fbfbfb"></div>
<div class="a" style="left:46px;top:365px;width:120px;height:1px;background:#adb2ba"></div>
<div class="a" style="left:46px;top:366px;width:120px;height:1px;background:#f8f8f8"></div>
<div class="a" style="left:46px;top:380px;width:120px;height:1px;background:#b4b7bc"></div>
<div class="a" style="left:46px;top:365px;width:1px;height:15px;background:#c4c6ca"></div>
<div class="a" style="left:165px;top:365px;width:1px;height:15px;background:#fafafa"></div>
<div class="a" style="left:167px;top:364px;width:164px;height:1px;background:#fbfbfb"></div>
<div class="a" style="left:167px;top:365px;width:164px;height:1px;background:#adb2ba"></div>
<div class="a" style="left:167px;top:366px;width:164px;height:1px;background:#f8f8f8"></div>
<div class="a" style="left:167px;top:380px;width:164px;height:1px;background:#b4b7bc"></div>
<div class="a" style="left:167px;top:365px;width:1px;height:15px;background:#c4c6ca"></div>
<div class="a" style="left:330px;top:365px;width:1px;height:15px;background:#fafafa"></div>
<svg class="a" style="left:29px;top:366px" width="13" height="13"><use href="#cbc"/></svg>
<div class="t" style="left:46.60px;top:367px;transform:scaleX(0.8850);">GENERAL</div>
<div class="t" style="left:168.00px;top:367px;transform:scaleX(0.8850);">GEN_FINANCIAL_AID</div>
<div class="t" style="left:337.50px;top:367px;transform:scaleX(0.8578);color:#008000">Grant--></div>
<div class="t" style="left:588.00px;top:367px;transform:scaleX(0.8465);color:#ff0000">Deny--></div>
<svg class="a" style="left:388px;top:366px" width="13" height="13"><use href="#cbc"/></svg>
<svg class="a" style="left:638px;top:366px" width="13" height="13"><use href="#cbu"/></svg>
<svg class="a" style="left:413px;top:366px" width="13" height="13"><use href="#cbu"/></svg>
<svg class="a" style="left:663px;top:366px" width="13" height="13"><use href="#cbu"/></svg>
<svg class="a" style="left:438px;top:366px" width="13" height="13"><use href="#cbc"/></svg>
<svg class="a" style="left:688px;top:366px" width="13" height="13"><use href="#cbu"/></svg>
<svg class="a" style="left:463px;top:366px" width="13" height="13"><use href="#cbc"/></svg>
<svg class="a" style="left:713px;top:366px" width="13" height="13"><use href="#cbu"/></svg>
<svg class="a" style="left:488px;top:366px" width="13" height="13"><use href="#cbc"/></svg>
<svg class="a" style="left:738px;top:366px" width="13" height="13"><use href="#cbu"/></svg>
<svg class="a" style="left:513px;top:366px" width="13" height="13"><use href="#cbc"/></svg>
<svg class="a" style="left:763px;top:366px" width="13" height="13"><use href="#cbu"/></svg>
<svg class="a" style="left:538px;top:366px" width="13" height="13"><use href="#cbu"/></svg>
<svg class="a" style="left:788px;top:366px" width="13" height="13"><use href="#cbc"/></svg>
<svg class="a" style="left:563px;top:366px" width="13" height="13"><use href="#cbu"/></svg>
<svg class="a" style="left:813px;top:366px" width="13" height="13"><use href="#cbc"/></svg>
<div class="a" style="left:24px;top:399px;width:808px;height:1px;background:#a0a0a0"></div>
<div class="a" style="left:46px;top:382px;width:120px;height:1px;background:#fbfbfb"></div>
<div class="a" style="left:46px;top:383px;width:120px;height:1px;background:#adb2ba"></div>
<div class="a" style="left:46px;top:384px;width:120px;height:1px;background:#f8f8f8"></div>
<div class="a" style="left:46px;top:398px;width:120px;height:1px;background:#b4b7bc"></div>
<div class="a" style="left:46px;top:383px;width:1px;height:15px;background:#c4c6ca"></div>
<div class="a" style="left:165px;top:383px;width:1px;height:15px;background:#fafafa"></div>
<div class="a" style="left:167px;top:382px;width:164px;height:1px;background:#fbfbfb"></div>
<div class="a" style="left:167px;top:383px;width:164px;height:1px;background:#adb2ba"></div>
<div class="a" style="left:167px;top:384px;width:164px;height:1px;background:#f8f8f8"></div>
<div class="a" style="left:167px;top:398px;width:164px;height:1px;background:#b4b7bc"></div>
<div class="a" style="left:167px;top:383px;width:1px;height:15px;background:#c4c6ca"></div>
<div class="a" style="left:330px;top:383px;width:1px;height:15px;background:#fafafa"></div>
<svg class="a" style="left:29px;top:384px" width="13" height="13"><use href="#cbc"/></svg>
<div class="t" style="left:46.60px;top:385px;transform:scaleX(0.8850);">EVENTS</div>
<div class="t" style="left:168.00px;top:385px;transform:scaleX(0.8850);">EVENTS_SEATING_MAP</div>
<div class="t" style="left:337.50px;top:385px;transform:scaleX(0.8578);color:#008000">Grant--></div>
<div class="t" style="left:588.00px;top:385px;transform:scaleX(0.8465);color:#ff0000">Deny--></div>
<svg class="a" style="left:388px;top:384px" width="13" height="13"><use href="#cbc"/></svg>
<svg class="a" style="left:638px;top:384px" width="13" height="13"><use href="#cbu"/></svg>
<svg class="a" style="left:413px;top:384px" width="13" height="13"><use href="#cbu"/></svg>
<svg class="a" style="left:663px;top:384px" width="13" height="13"><use href="#cbu"/></svg>
<svg class="a" style="left:438px;top:384px" width="13" height="13"><use href="#cbc"/></svg>
<svg class="a" style="left:688px;top:384px" width="13" height="13"><use href="#cbu"/></svg>
<svg class="a" style="left:463px;top:384px" width="13" height="13"><use href="#cbc"/></svg>
<svg class="a" style="left:713px;top:384px" width="13" height="13"><use href="#cbu"/></svg>
<svg class="a" style="left:488px;top:384px" width="13" height="13"><use href="#cbc"/></svg>
<svg class="a" style="left:738px;top:384px" width="13" height="13"><use href="#cbu"/></svg>
<svg class="a" style="left:513px;top:384px" width="13" height="13"><use href="#cbc"/></svg>
<svg class="a" style="left:763px;top:384px" width="13" height="13"><use href="#cbu"/></svg>
<svg class="a" style="left:538px;top:384px" width="13" height="13"><use href="#cbu"/></svg>
<svg class="a" style="left:788px;top:384px" width="13" height="13"><use href="#cbc"/></svg>
<svg class="a" style="left:563px;top:384px" width="13" height="13"><use href="#cbu"/></svg>
<svg class="a" style="left:813px;top:384px" width="13" height="13"><use href="#cbc"/></svg>
<div class="a" style="left:24px;top:417px;width:808px;height:1px;background:#a0a0a0"></div>
<div class="a" style="left:46px;top:400px;width:120px;height:1px;background:#fbfbfb"></div>
<div class="a" style="left:46px;top:401px;width:120px;height:1px;background:#adb2ba"></div>
<div class="a" style="left:46px;top:402px;width:120px;height:1px;background:#f8f8f8"></div>
<div class="a" style="left:46px;top:416px;width:120px;height:1px;background:#b4b7bc"></div>
<div class="a" style="left:46px;top:401px;width:1px;height:15px;background:#c4c6ca"></div>
<div class="a" style="left:165px;top:401px;width:1px;height:15px;background:#fafafa"></div>
<div class="a" style="left:167px;top:400px;width:164px;height:1px;background:#fbfbfb"></div>
<div class="a" style="left:167px;top:401px;width:164px;height:1px;background:#adb2ba"></div>
<div class="a" style="left:167px;top:402px;width:164px;height:1px;background:#f8f8f8"></div>
<div class="a" style="left:167px;top:416px;width:164px;height:1px;background:#b4b7bc"></div>
<div class="a" style="left:167px;top:401px;width:1px;height:15px;background:#c4c6ca"></div>
<div class="a" style="left:330px;top:401px;width:1px;height:15px;background:#fafafa"></div>
<svg class="a" style="left:29px;top:402px" width="13" height="13"><use href="#cbc"/></svg>
<div class="t" style="left:46.60px;top:403px;transform:scaleX(0.8850);">EVENTS</div>
<div class="t" style="left:168.00px;top:403px;transform:scaleX(0.8850);">EVENTS_AGENDA</div>
<div class="t" style="left:337.50px;top:403px;transform:scaleX(0.8578);color:#008000">Grant--></div>
<div class="t" style="left:588.00px;top:403px;transform:scaleX(0.8465);color:#ff0000">Deny--></div>
<svg class="a" style="left:388px;top:402px" width="13" height="13"><use href="#cbc"/></svg>
<svg class="a" style="left:638px;top:402px" width="13" height="13"><use href="#cbu"/></svg>
<svg class="a" style="left:413px;top:402px" width="13" height="13"><use href="#cbu"/></svg>
<svg class="a" style="left:663px;top:402px" width="13" height="13"><use href="#cbu"/></svg>
<svg class="a" style="left:438px;top:402px" width="13" height="13"><use href="#cbc"/></svg>
<svg class="a" style="left:688px;top:402px" width="13" height="13"><use href="#cbu"/></svg>
<svg class="a" style="left:463px;top:402px" width="13" height="13"><use href="#cbc"/></svg>
<svg class="a" style="left:713px;top:402px" width="13" height="13"><use href="#cbu"/></svg>
<svg class="a" style="left:488px;top:402px" width="13" height="13"><use href="#cbc"/></svg>
<svg class="a" style="left:738px;top:402px" width="13" height="13"><use href="#cbu"/></svg>
<svg class="a" style="left:513px;top:402px" width="13" height="13"><use href="#cbc"/></svg>
<svg class="a" style="left:763px;top:402px" width="13" height="13"><use href="#cbu"/></svg>
<svg class="a" style="left:538px;top:402px" width="13" height="13"><use href="#cbu"/></svg>
<svg class="a" style="left:788px;top:402px" width="13" height="13"><use href="#cbc"/></svg>
<svg class="a" style="left:563px;top:402px" width="13" height="13"><use href="#cbu"/></svg>
<svg class="a" style="left:813px;top:402px" width="13" height="13"><use href="#cbc"/></svg>
<div class="a" style="left:24px;top:435px;width:808px;height:1px;background:#a0a0a0"></div>
<div class="a" style="left:46px;top:418px;width:120px;height:1px;background:#fbfbfb"></div>
<div class="a" style="left:46px;top:419px;width:120px;height:1px;background:#adb2ba"></div>
<div class="a" style="left:46px;top:420px;width:120px;height:1px;background:#f8f8f8"></div>
<div class="a" style="left:46px;top:434px;width:120px;height:1px;background:#b4b7bc"></div>
<div class="a" style="left:46px;top:419px;width:1px;height:15px;background:#c4c6ca"></div>
<div class="a" style="left:165px;top:419px;width:1px;height:15px;background:#fafafa"></div>
<div class="a" style="left:167px;top:418px;width:164px;height:1px;background:#fbfbfb"></div>
<div class="a" style="left:167px;top:419px;width:164px;height:1px;background:#adb2ba"></div>
<div class="a" style="left:167px;top:420px;width:164px;height:1px;background:#f8f8f8"></div>
<div class="a" style="left:167px;top:434px;width:164px;height:1px;background:#b4b7bc"></div>
<div class="a" style="left:167px;top:419px;width:1px;height:15px;background:#c4c6ca"></div>
<div class="a" style="left:330px;top:419px;width:1px;height:15px;background:#fafafa"></div>
<svg class="a" style="left:29px;top:420px" width="13" height="13"><use href="#cbc"/></svg>
<div class="t" style="left:46.60px;top:421px;transform:scaleX(0.8850);">EVENTS</div>
<div class="t" style="left:168.00px;top:421px;transform:scaleX(0.8850);">EVENTS_SETUP</div>
<div class="t" style="left:337.50px;top:421px;transform:scaleX(0.8578);color:#008000">Grant--></div>
<div class="t" style="left:588.00px;top:421px;transform:scaleX(0.8465);color:#ff0000">Deny--></div>
<svg class="a" style="left:388px;top:420px" width="13" height="13"><use href="#cbc"/></svg>
<svg class="a" style="left:638px;top:420px" width="13" height="13"><use href="#cbu"/></svg>
<svg class="a" style="left:413px;top:420px" width="13" height="13"><use href="#cbu"/></svg>
<svg class="a" style="left:663px;top:420px" width="13" height="13"><use href="#cbu"/></svg>
<svg class="a" style="left:438px;top:420px" width="13" height="13"><use href="#cbc"/></svg>
<svg class="a" style="left:688px;top:420px" width="13" height="13"><use href="#cbu"/></svg>
<svg class="a" style="left:463px;top:420px" width="13" height="13"><use href="#cbc"/></svg>
<svg class="a" style="left:713px;top:420px" width="13" height="13"><use href="#cbu"/></svg>
<svg class="a" style="left:488px;top:420px" width="13" height="13"><use href="#cbc"/></svg>
<svg class="a" style="left:738px;top:420px" width="13" height="13"><use href="#cbu"/></svg>
<svg class="a" style="left:513px;top:420px" width="13" height="13"><use href="#cbc"/></svg>
<svg class="a" style="left:763px;top:420px" width="13" height="13"><use href="#cbu"/></svg>
<svg class="a" style="left:538px;top:420px" width="13" height="13"><use href="#cbu"/></svg>
<svg class="a" style="left:788px;top:420px" width="13" height="13"><use href="#cbc"/></svg>
<svg class="a" style="left:563px;top:420px" width="13" height="13"><use href="#cbu"/></svg>
<svg class="a" style="left:813px;top:420px" width="13" height="13"><use href="#cbc"/></svg>
<div class="a" style="left:24px;top:453px;width:808px;height:1px;background:#a0a0a0"></div>
<div class="a" style="left:46px;top:436px;width:120px;height:1px;background:#fbfbfb"></div>
<div class="a" style="left:46px;top:437px;width:120px;height:1px;background:#adb2ba"></div>
<div class="a" style="left:46px;top:438px;width:120px;height:1px;background:#f8f8f8"></div>
<div class="a" style="left:46px;top:452px;width:120px;height:1px;background:#b4b7bc"></div>
<div class="a" style="left:46px;top:437px;width:1px;height:15px;background:#c4c6ca"></div>
<div class="a" style="left:165px;top:437px;width:1px;height:15px;background:#fafafa"></div>
<div class="a" style="left:167px;top:436px;width:164px;height:1px;background:#fbfbfb"></div>
<div class="a" style="left:167px;top:437px;width:164px;height:1px;background:#adb2ba"></div>
<div class="a" style="left:167px;top:438px;width:164px;height:1px;background:#f8f8f8"></div>
<div class="a" style="left:167px;top:452px;width:164px;height:1px;background:#b4b7bc"></div>
<div class="a" style="left:167px;top:437px;width:1px;height:15px;background:#c4c6ca"></div>
<div class="a" style="left:330px;top:437px;width:1px;height:15px;background:#fafafa"></div>
<svg class="a" style="left:29px;top:438px" width="13" height="13"><use href="#cbc"/></svg>
<div class="t" style="left:46.60px;top:439px;transform:scaleX(0.8850);">TRANSCRIPT</div>
<div class="t" style="left:168.00px;top:439px;transform:scaleX(0.8850);">TRANSCRIPTS_INTERNAL</div>
<div class="t" style="left:337.50px;top:439px;transform:scaleX(0.8578);color:#008000">Grant--></div>
<div class="t" style="left:588.00px;top:439px;transform:scaleX(0.8465);color:#ff0000">Deny--></div>
<svg class="a" style="left:388px;top:438px" width="13" height="13"><use href="#cbc"/></svg>
<svg class="a" style="left:638px;top:438px" width="13" height="13"><use href="#cbu"/></svg>
<svg class="a" style="left:413px;top:438px" width="13" height="13"><use href="#cbu"/></svg>
<svg class="a" style="left:663px;top:438px" width="13" height="13"><use href="#cbu"/></svg>
<svg class="a" style="left:438px;top:438px" width="13" height="13"><use href="#cbc"/></svg>
<svg class="a" style="left:688px;top:438px" width="13" height="13"><use href="#cbu"/></svg>
<svg class="a" style="left:463px;top:438px" width="13" height="13"><use href="#cbc"/></svg>
<svg class="a" style="left:713px;top:438px" width="13" height="13"><use href="#cbu"/></svg>
<svg class="a" style="left:488px;top:438px" width="13" height="13"><use href="#cbc"/></svg>
<svg class="a" style="left:738px;top:438px" width="13" height="13"><use href="#cbu"/></svg>
<svg class="a" style="left:513px;top:438px" width="13" height="13"><use href="#cbc"/></svg>
<svg class="a" style="left:763px;top:438px" width="13" height="13"><use href="#cbu"/></svg>
<svg class="a" style="left:538px;top:438px" width="13" height="13"><use href="#cbu"/></svg>
<svg class="a" style="left:788px;top:438px" width="13" height="13"><use href="#cbc"/></svg>
<svg class="a" style="left:563px;top:438px" width="13" height="13"><use href="#cbu"/></svg>
<svg class="a" style="left:813px;top:438px" width="13" height="13"><use href="#cbc"/></svg>
<div class="a" style="left:24px;top:471px;width:808px;height:1px;background:#a0a0a0"></div>
<div class="a" style="left:46px;top:454px;width:120px;height:1px;background:#fbfbfb"></div>
<div class="a" style="left:46px;top:455px;width:120px;height:1px;background:#adb2ba"></div>
<div class="a" style="left:46px;top:456px;width:120px;height:1px;background:#f8f8f8"></div>
<div class="a" style="left:46px;top:470px;width:120px;height:1px;background:#b4b7bc"></div>
<div class="a" style="left:46px;top:455px;width:1px;height:15px;background:#c4c6ca"></div>
<div class="a" style="left:165px;top:455px;width:1px;height:15px;background:#fafafa"></div>
<div class="a" style="left:167px;top:454px;width:164px;height:1px;background:#fbfbfb"></div>
<div class="a" style="left:167px;top:455px;width:164px;height:1px;background:#adb2ba"></div>
<div class="a" style="left:167px;top:456px;width:164px;height:1px;background:#f8f8f8"></div>
<div class="a" style="left:167px;top:470px;width:164px;height:1px;background:#b4b7bc"></div>
<div class="a" style="left:167px;top:455px;width:1px;height:15px;background:#c4c6ca"></div>
<div class="a" style="left:330px;top:455px;width:1px;height:15px;background:#fafafa"></div>
<svg class="a" style="left:29px;top:456px" width="13" height="13"><use href="#cbc"/></svg>
<div class="t" style="left:46.60px;top:457px;transform:scaleX(0.8850);">TRANSCRIPT</div>
<div class="t" style="left:168.00px;top:457px;transform:scaleX(0.8850);">TRANSCRIPTS_EXTERNAL</div>
<div class="t" style="left:337.50px;top:457px;transform:scaleX(0.8578);color:#008000">Grant--></div>
<div class="t" style="left:588.00px;top:457px;transform:scaleX(0.8465);color:#ff0000">Deny--></div>
<svg class="a" style="left:388px;top:456px" width="13" height="13"><use href="#cbc"/></svg>
<svg class="a" style="left:638px;top:456px" width="13" height="13"><use href="#cbu"/></svg>
<svg class="a" style="left:413px;top:456px" width="13" height="13"><use href="#cbu"/></svg>
<svg class="a" style="left:663px;top:456px" width="13" height="13"><use href="#cbu"/></svg>
<svg class="a" style="left:438px;top:456px" width="13" height="13"><use href="#cbc"/></svg>
<svg class="a" style="left:688px;top:456px" width="13" height="13"><use href="#cbu"/></svg>
<svg class="a" style="left:463px;top:456px" width="13" height="13"><use href="#cbc"/></svg>
<svg class="a" style="left:713px;top:456px" width="13" height="13"><use href="#cbu"/></svg>
<svg class="a" style="left:488px;top:456px" width="13" height="13"><use href="#cbc"/></svg>
<svg class="a" style="left:738px;top:456px" width="13" height="13"><use href="#cbu"/></svg>
<svg class="a" style="left:513px;top:456px" width="13" height="13"><use href="#cbc"/></svg>
<svg class="a" style="left:763px;top:456px" width="13" height="13"><use href="#cbu"/></svg>
<svg class="a" style="left:538px;top:456px" width="13" height="13"><use href="#cbu"/></svg>
<svg class="a" style="left:788px;top:456px" width="13" height="13"><use href="#cbc"/></svg>
<svg class="a" style="left:563px;top:456px" width="13" height="13"><use href="#cbu"/></svg>
<svg class="a" style="left:813px;top:456px" width="13" height="13"><use href="#cbc"/></svg>
<div class="a" style="left:24px;top:489px;width:808px;height:1px;background:#a0a0a0"></div>
<div class="a" style="left:46px;top:472px;width:120px;height:1px;background:#fbfbfb"></div>
<div class="a" style="left:46px;top:473px;width:120px;height:1px;background:#adb2ba"></div>
<div class="a" style="left:46px;top:474px;width:120px;height:1px;background:#f8f8f8"></div>
<div class="a" style="left:46px;top:488px;width:120px;height:1px;background:#b4b7bc"></div>
<div class="a" style="left:46px;top:473px;width:1px;height:15px;background:#c4c6ca"></div>
<div class="a" style="left:165px;top:473px;width:1px;height:15px;background:#fafafa"></div>
<div class="a" style="left:167px;top:472px;width:164px;height:1px;background:#fbfbfb"></div>
<div class="a" style="left:167px;top:473px;width:164px;height:1px;background:#adb2ba"></div>
<div class="a" style="left:167px;top:474px;width:164px;height:1px;background:#f8f8f8"></div>
<div class="a" style="left:167px;top:488px;width:164px;height:1px;background:#b4b7bc"></div>
<div class="a" style="left:167px;top:473px;width:1px;height:15px;background:#c4c6ca"></div>
<div class="a" style="left:330px;top:473px;width:1px;height:15px;background:#fafafa"></div>
<svg class="a" style="left:29px;top:474px" width="13" height="13"><use href="#cbc"/></svg>
<div class="t" style="left:46.60px;top:475px;transform:scaleX(0.8850);">TRANSCRIPT</div>
<div class="t" style="left:168.00px;top:475px;transform:scaleX(0.8850);">TRANSCRIPT_INACTIVE</div>
<div class="t" style="left:337.50px;top:475px;transform:scaleX(0.8578);color:#008000">Grant--></div>
<div class="t" style="left:588.00px;top:475px;transform:scaleX(0.8465);color:#ff0000">Deny--></div>
<svg class="a" style="left:388px;top:474px" width="13" height="13"><use href="#cbc"/></svg>
<svg class="a" style="left:638px;top:474px" width="13" height="13"><use href="#cbu"/></svg>
<svg class="a" style="left:413px;top:474px" width="13" height="13"><use href="#cbu"/></svg>
<svg class="a" style="left:663px;top:474px" width="13" height="13"><use href="#cbu"/></svg>
<svg class="a" style="left:438px;top:474px" width="13" height="13"><use href="#cbc"/></svg>
<svg class="a" style="left:688px;top:474px" width="13" height="13"><use href="#cbu"/></svg>
<svg class="a" style="left:463px;top:474px" width="13" height="13"><use href="#cbc"/></svg>
<svg class="a" style="left:713px;top:474px" width="13" height="13"><use href="#cbu"/></svg>
<svg class="a" style="left:488px;top:474px" width="13" height="13"><use href="#cbc"/></svg>
<svg class="a" style="left:738px;top:474px" width="13" height="13"><use href="#cbu"/></svg>
<svg class="a" style="left:513px;top:474px" width="13" height="13"><use href="#cbc"/></svg>
<svg class="a" style="left:763px;top:474px" width="13" height="13"><use href="#cbu"/></svg>
<svg class="a" style="left:538px;top:474px" width="13" height="13"><use href="#cbu"/></svg>
<svg class="a" style="left:788px;top:474px" width="13" height="13"><use href="#cbc"/></svg>
<svg class="a" style="left:563px;top:474px" width="13" height="13"><use href="#cbu"/></svg>
<svg class="a" style="left:813px;top:474px" width="13" height="13"><use href="#cbc"/></svg>
<div class="a" style="left:24px;top:507px;width:808px;height:1px;background:#a0a0a0"></div>
<div class="a" style="left:46px;top:490px;width:120px;height:1px;background:#fbfbfb"></div>
<div class="a" style="left:46px;top:491px;width:120px;height:1px;background:#adb2ba"></div>
<div class="a" style="left:46px;top:492px;width:120px;height:1px;background:#f8f8f8"></div>
<div class="a" style="left:46px;top:506px;width:120px;height:1px;background:#b4b7bc"></div>
<div class="a" style="left:46px;top:491px;width:1px;height:15px;background:#c4c6ca"></div>
<div class="a" style="left:165px;top:491px;width:1px;height:15px;background:#fafafa"></div>
<div class="a" style="left:167px;top:490px;width:164px;height:1px;background:#fbfbfb"></div>
<div class="a" style="left:167px;top:491px;width:164px;height:1px;background:#adb2ba"></div>
<div class="a" style="left:167px;top:492px;width:164px;height:1px;background:#f8f8f8"></div>
<div class="a" style="left:167px;top:506px;width:164px;height:1px;background:#b4b7bc"></div>
<div class="a" style="left:167px;top:491px;width:1px;height:15px;background:#c4c6ca"></div>
<div class="a" style="left:330px;top:491px;width:1px;height:15px;background:#fafafa"></div>
<svg class="a" style="left:29px;top:492px" width="13" height="13"><use href="#cbc"/></svg>
<div class="t" style="left:46.60px;top:493px;transform:scaleX(0.8850);">TRANSCRIPT</div>
<div class="t" style="left:168.00px;top:493px;transform:scaleX(0.8850);">TRANSCRIPTS_HIGH_SCHOOL</div>
<div class="t" style="left:337.50px;top:493px;transform:scaleX(0.8578);color:#008000">Grant--></div>
<div class="t" style="left:588.00px;top:493px;transform:scaleX(0.8465);color:#ff0000">Deny--></div>
<svg class="a" style="left:388px;top:492px" width="13" height="13"><use href="#cbc"/></svg>
<svg class="a" style="left:638px;top:492px" width="13" height="13"><use href="#cbu"/></svg>
<svg class="a" style="left:413px;top:492px" width="13" height="13"><use href="#cbu"/></svg>
<svg class="a" style="left:663px;top:492px" width="13" height="13"><use href="#cbu"/></svg>
<svg class="a" style="left:438px;top:492px" width="13" height="13"><use href="#cbc"/></svg>
<svg class="a" style="left:688px;top:492px" width="13" height="13"><use href="#cbu"/></svg>
<svg class="a" style="left:463px;top:492px" width="13" height="13"><use href="#cbc"/></svg>
<svg class="a" style="left:713px;top:492px" width="13" height="13"><use href="#cbu"/></svg>
<svg class="a" style="left:488px;top:492px" width="13" height="13"><use href="#cbc"/></svg>
<svg class="a" style="left:738px;top:492px" width="13" height="13"><use href="#cbu"/></svg>
<svg class="a" style="left:513px;top:492px" width="13" height="13"><use href="#cbc"/></svg>
<svg class="a" style="left:763px;top:492px" width="13" height="13"><use href="#cbu"/></svg>
<svg class="a" style="left:538px;top:492px" width="13" height="13"><use href="#cbu"/></svg>
<svg class="a" style="left:788px;top:492px" width="13" height="13"><use href="#cbc"/></svg>
<svg class="a" style="left:563px;top:492px" width="13" height="13"><use href="#cbu"/></svg>
<svg class="a" style="left:813px;top:492px" width="13" height="13"><use href="#cbc"/></svg>
<div class="a" style="left:45px;top:237px;width:1px;height:271px;background:#a0a0a0"></div>
<div class="a" style="left:166px;top:237px;width:1px;height:271px;background:#a0a0a0"></div>
<div class="a" style="left:331px;top:237px;width:1px;height:271px;background:#a0a0a0"></div>
<div class="a" style="left:381px;top:237px;width:1px;height:271px;background:#a0a0a0"></div>
<div class="a" style="left:406px;top:237px;width:1px;height:271px;background:#a0a0a0"></div>
<div class="a" style="left:431px;top:237px;width:1px;height:271px;background:#a0a0a0"></div>
<div class="a" style="left:456px;top:237px;width:1px;height:271px;background:#a0a0a0"></div>
<div class="a" style="left:481px;top:237px;width:1px;height:271px;background:#a0a0a0"></div>
<div class="a" style="left:506px;top:237px;width:1px;height:271px;background:#a0a0a0"></div>
<div class="a" style="left:531px;top:237px;width:1px;height:271px;background:#a0a0a0"></div>
<div class="a" style="left:556px;top:237px;width:1px;height:271px;background:#a0a0a0"></div>
<div class="a" style="left:581px;top:237px;width:1px;height:271px;background:#a0a0a0"></div>
<div class="a" style="left:631px;top:237px;width:1px;height:271px;background:#a0a0a0"></div>
<div class="a" style="left:656px;top:237px;width:1px;height:271px;background:#a0a0a0"></div>
<div class="a" style="left:681px;top:237px;width:1px;height:271px;background:#a0a0a0"></div>
<div class="a" style="left:706px;top:237px;width:1px;height:271px;background:#a0a0a0"></div>
<div class="a" style="left:731px;top:237px;width:1px;height:271px;background:#a0a0a0"></div>
<div class="a" style="left:756px;top:237px;width:1px;height:271px;background:#a0a0a0"></div>
<div class="a" style="left:781px;top:237px;width:1px;height:271px;background:#a0a0a0"></div>
<div class="a" style="left:806px;top:237px;width:1px;height:271px;background:#a0a0a0"></div>
<div class="a" style="left:831px;top:237px;width:1px;height:271px;background:#a0a0a0"></div>
</body></html>
